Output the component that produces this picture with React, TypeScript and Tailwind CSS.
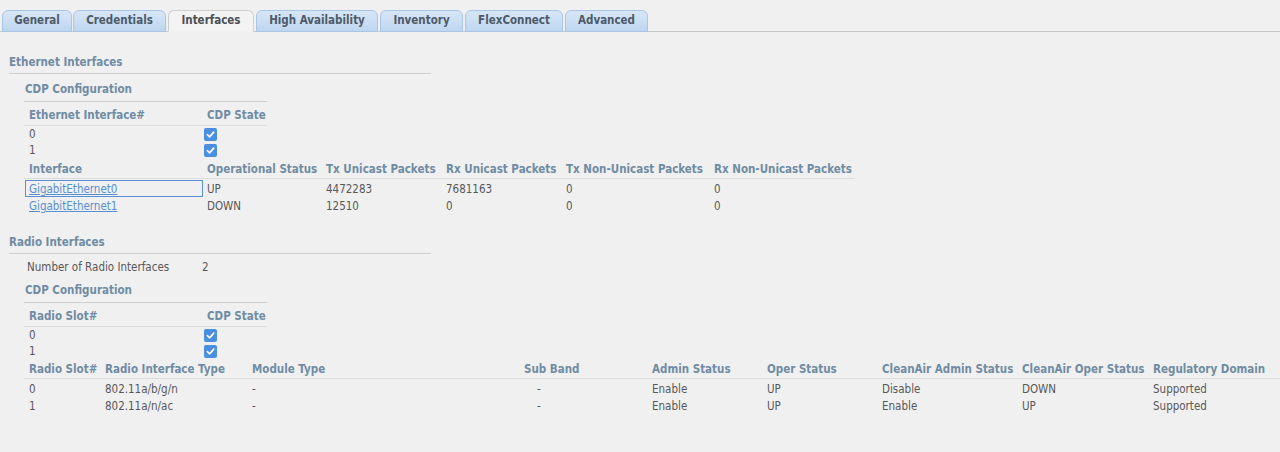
import type React from "react";

const tabs: [string, string][] = [
  ["General", "w-[70px]"],
  ["Credentials", "w-[93px]"],
  ["Interfaces", "w-[86px]"],
  ["High Availability", "w-[122px]"],
  ["Inventory", "w-[83px]"],
  ["FlexConnect", "w-[98px]"],
  ["Advanced", "w-[83px]"],
];

const Check = () => (
  <span className="inline-flex h-[13px] w-[13px] items-center justify-center rounded-[2px] bg-[#4a8fe0]">
    <svg width="9" height="9" viewBox="0 0 10 10">
      <path d="M1.5 5.2 L4 7.6 L8.6 2.4" fill="none" stroke="#fff" strokeWidth="1.8" strokeLinecap="round" strokeLinejoin="round" />
    </svg>
  </span>
);

const SectionTitle: React.FC<{ children: React.ReactNode; className?: string }> = ({ children, className = "" }) => (
  <div className={`flex h-[22px] w-[422px] items-center border-b border-[#cfcfcf] pt-[1px] font-bold text-[#6f8ca4] ${className}`}>
    {children}
  </div>
);

const SubTitle: React.FC<{ children: React.ReactNode }> = ({ children }) => (
  <div className="ml-[15px] mt-[4px] flex h-[24px] w-[243px] items-center border-b border-[#cfcfcf] pl-[1px] pt-[1px] font-bold text-[#6f8ca4]">
    {children}
  </div>
);

const CdpTable: React.FC<{ label: string }> = ({ label }) => (
  <div className="ml-[15px] w-[243px]">
    <div className="mt-[1px] flex h-[23px] items-center border-b border-[#dcdcdc] pl-[5px] pt-[3px] font-bold text-[#6f8ca4]">
      <span className="w-[178px]">{label}</span>
      <span>CDP State</span>
    </div>
    {["0", "1"].map((n) => (
      <div key={n} className="flex h-[16px] items-center pl-[5px] pt-[1px]">
        <span className="w-[175px]">{n}</span>
        <Check />
      </div>
    ))}
  </div>
);

export default function App() {
  const ethCols = "grid-cols-[178px_119px_120px_120px_148px_1fr]";
  const radioCols = "grid-cols-[76px_147px_272px_128px_115px_115px_140px_131px_1fr]";
  const ethRows = [
    ["GigabitEthernet0", "UP", "4472283", "7681163", "0", "0"],
    ["GigabitEthernet1", "DOWN", "12510", "0", "0", "0"],
  ];
  const radioRows = [
    ["0", "802.11a/b/g/n", "-", "-", "Enable", "UP", "Disable", "DOWN", "Supported"],
    ["1", "802.11a/n/ac", "-", "-", "Enable", "UP", "Enable", "UP", "Supported"],
  ];

  return (
    <div className="min-h-screen bg-[#f0f0f0] font-['DejaVu_Sans_Condensed','DejaVu_Sans',sans-serif] text-[11.5px] text-[#585858]">
      <div className="flex h-[32px] items-end border-b border-[#c8c8c8] pl-[2px]">
        {tabs.map(([t, w], i) => (
          <div
            key={t}
            className={`-mb-px flex h-[22px] ${w} ${i === 0 ? "" : i === 1 ? "ml-[1px]" : "ml-[2px]"} items-center justify-center rounded-t-[6px] border text-[11.5px] font-bold ${
              t === "Interfaces"
                ? "border-[#cfcfcf] border-b-[#f0f0f0] bg-[#f3f3f3] text-[#4b4f55]"
                : "border-[#a9c6e6] bg-gradient-to-b from-[#d6e6f7] to-[#bfd6f1] text-[#4e5a68]"
            }`}
          >
            {t}
          </div>
        ))}
      </div>

      <div className="pl-[9px]">
        <SectionTitle className="mt-[20px]">Ethernet Interfaces</SectionTitle>
        <SubTitle>CDP Configuration</SubTitle>
        <CdpTable label="Ethernet Interface#" />

        <div className="ml-[15px] w-[831px]">
          <div className={`grid h-[21px] ${ethCols} items-center border-b border-[#dcdcdc] pl-[5px] pt-[3px] font-bold text-[#6f8ca4]`}>
            <span>Interface</span>
            <span>Operational Status</span>
            <span>Tx Unicast Packets</span>
            <span>Rx Unicast Packets</span>
            <span>Tx Non-Unicast Packets</span>
            <span>Rx Non-Unicast Packets</span>
          </div>
          {ethRows.map((r, i) => (
            <div key={r[0]} className={`grid h-[17px] ${ethCols} items-center pl-[5px]`}>
              <span
                className={`-ml-[4px] flex h-[17px] w-[178px] items-center border pl-[3px] pt-[1px] ${
                  i === 0 ? "border-[#5b8fd6]" : "border-transparent"
                }`}
              >
                <a className="text-[#5a8fd0] underline">{r[0]}</a>
              </span>
              {r.slice(1).map((c, j) => (
                <span key={j} className="pt-[2px]">
                  {c}
                </span>
              ))}
            </div>
          ))}
        </div>

        <SectionTitle className="mt-[19px]">Radio Interfaces</SectionTitle>
        <div className="ml-[18px] mt-[5px] flex h-[16px] items-center pt-[1px]">
          <span className="w-[175px]">Number of Radio Interfaces</span>
          <span>2</span>
        </div>
        <SubTitle>CDP Configuration</SubTitle>
        <CdpTable label="Radio Slot#" />

        <div className="ml-[15px]">
          <div className={`grid h-[20px] ${radioCols} items-center border-b border-[#dcdcdc] pl-[5px] pt-[2px] font-bold text-[#6f8ca4]`}>
            <span>Radio Slot#</span>
            <span>Radio Interface Type</span>
            <span>Module Type</span>
            <span>Sub Band</span>
            <span>Admin Status</span>
            <span>Oper Status</span>
            <span>CleanAir Admin Status</span>
            <span>CleanAir Oper Status</span>
            <span>Regulatory Domain</span>
          </div>
          {radioRows.map((r) => (
            <div key={r[0]} className={`grid h-[17px] ${radioCols} items-center pl-[5px] pt-[2px]`}>
              {r.map((c, j) => (
                <span key={j} className={j === 3 ? "pl-[13px]" : ""}>
                  {c}
                </span>
              ))}
            </div>
          ))}
        </div>
      </div>
    </div>
  );
}
